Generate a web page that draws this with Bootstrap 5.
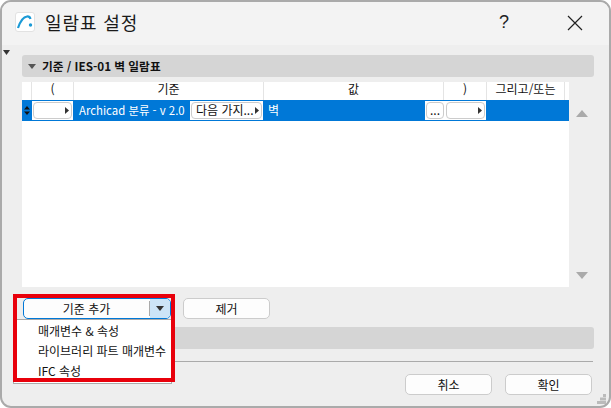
<!DOCTYPE html>
<html lang="ko">
  <head>
    <meta charset="UTF-8" />
    <meta name="viewport" content="width=device-width, initial-scale=1.0" />
    <title>일람표 설정</title>
    <link
      href="https://cdn.jsdelivr.net/npm/bootstrap@5.3.3/dist/css/bootstrap.min.css"
      rel="stylesheet"
    />
    <style>
      html, body { margin: 0; height: 408px; background: #fff; overflow: hidden; }
      body { font: 12px/1.2 "Noto Sans CJK KR", "Liberation Sans", sans-serif; color: #111; }
      .win { position: relative; width: 611px; height: 408px; background: #eee; border: 2px solid #aaa; border-radius: 11px; overflow: hidden; }
      .titlebar { height: 43px; background: #f3f3f3; padding-left: 13px; }
      .app-logo { width: 20px; height: 20px; margin-top: -3px; background: #fff; border: 1px solid #e2e2e2; border-radius: 3px; }
      .win-title { font-size: 18px; margin: -2px 0 0 10px; color: #1a1a1a; letter-spacing: .9px; }
      .win-help { font: 18px "Liberation Sans", sans-serif; margin: -2px 0 0 auto; width: 20px; text-align: center; color: #222; }
      .win-close { margin: -2px 26px 0 53px; }
      .pane { padding: 10px 15px 0 20px; position: relative; }
      .sect-bar { height: 22px; background: #d5d5d5; border-radius: 3px; padding-left: 6px; font-size: 11.7px; font-weight: 700; width: 572px; }
      .sect-bar svg { margin-right: 6px; }
      .list-wrap { margin-top: 5px; width: 572px; }
      .list-box { width: 547px; height: 205px; background: #fff; }
      .col-head { height: 18px; }
      .col-head > div { border-right: 1px solid #e4e4e4; height: 18px; text-align: center; }
      .c0 { width: 10px; flex: none; } .c1 { width: 42px; } .c2 { width: 190px; } .c3 { width: 180px; } .c4 { width: 43px; } .c5 { width: 78px; }
      .sel-row { height: 21px; background: #0078d7; color: #fff; }
      .mini-cell { height: 19px; background: #fff; padding: 1px; gap: 2px; }
      .mini { height: 17px; flex: 1; background: #fff; color: #111; border: 1px solid #ccc; border-radius: 4px; padding: 0 2px 0 4px; white-space: nowrap; }
      .mini .tri { margin-left: auto; }
      .cell-open { width: 41px; }
      .crit-txt { width: 117px; padding-left: 6px; font-size: 11.4px; white-space: nowrap; }
      .cell-op { width: 73px; }
      .val-txt { width: 162px; padding-left: 5px; }
      .cell-end { width: 61px; }
      .mini-dot { flex: 0 0 18px; justify-content: center; padding: 0; }
      .scroll-col { width: 25px; padding: 28px 0 8px; }
      .act-row { margin-top: 11px; padding-left: 1px; }
      .dlg-btn { width: 87px; height: 21px; background: #fdfdfd; border: 1px solid #ccc; border-radius: 5px; padding: 0; font-size: 12px; color: #111; line-height: 1; }
      .split-btn { width: 148px; height: 21px; background: #fdfdfd; border: 1px solid #0078d7; border-radius: 5px; overflow: hidden; margin-right: 12px; }
      .split-main { flex: 1; text-align: center; border-right: 1px solid #aaa; height: 15px; line-height: 15px; }
      .split-arrow { width: 20px; height: 100%; background: #cce4f7; }
      .sect-low { margin-top: 8px; }
      .foot-line { border-top: 1px solid #aaa; margin-top: 12px; width: 571px; }
      .foot-row { margin-top: 12px; width: 570px; gap: 13px; }
      .add-menu { position: absolute; left: 11px; top: 317px; width: 159px; height: 65px; background: #fff; border: 1px solid #aaa; padding: 1px 0 0 24px; line-height: 20px; }
      .mark-box { position: absolute; left: 11px; top: 292px; width: 162px; height: 88px; border: 4px solid #e8000b; pointer-events: none; }
      .side-tick { position: absolute; left: 1px; top: 48px; }
      .grip { position: absolute; right: 2px; bottom: 1px; }
    </style>
  </head>
  <body>
    <div class="win">
      <div class="titlebar d-flex align-items-center">
        <div class="app-logo d-flex align-items-center justify-content-center">
          <svg width="18" height="18" viewBox="0 0 18 18">
            <path d="M2 15C4 9 7 4 11 3.500c2-.2 3 .8 3.500 2.500" fill="none" stroke="#1b9ad6" stroke-width="2.200" />
            <circle cx="14.500" cy="12" r="1.700" fill="#1b9ad6" />
          </svg>
        </div>
        <div class="win-title">일람표 설정</div>
        <div class="win-help">?</div>
        <svg class="win-close" width="16" height="16" viewBox="0 0 16 16">
          <path d="M1 1l14 14M15 1L1 15" stroke="#222" stroke-width="1.200" />
        </svg>
      </div>

      <svg class="side-tick" width="7" height="5" viewBox="0 0 7 5"><path d="M0 0h7L3.500 5z" fill="#333" /></svg>

      <div class="pane">
        <div class="sect-bar d-flex align-items-center">
          <svg width="8" height="5" viewBox="0 0 8 5"><path d="M0 0h8L4 5z" fill="#555" /></svg>
          기준 / IES-01 벽 일람표
        </div>

        <div class="list-wrap d-flex">
          <div class="list-box">
            <div class="col-head d-flex">
              <div class="c0"></div>
              <div class="c1">(</div>
              <div class="c2">기준</div>
              <div class="c3">값</div>
              <div class="c4">)</div>
              <div class="c5">그리고/또는</div>
            </div>
            <div class="sel-row d-flex align-items-center">
              <svg class="c0" width="10" height="11" viewBox="0 0 10 11"><path d="M5 1l3 3.500H2zM5 10L2 6.500h6z" fill="#111" /></svg>
              <div class="mini-cell cell-open d-flex">
                <div class="mini d-flex align-items-center">
                  <svg class="tri" width="4" height="7" viewBox="0 0 4 7"><path d="M0 0l4 3.500L0 7z" fill="#333" /></svg>
                </div>
              </div>
              <div class="crit-txt">Archicad 분류 - v 2.0</div>
              <div class="mini-cell cell-op d-flex">
                <div class="mini d-flex align-items-center">
                  다음 가지...
                  <svg class="tri" width="4" height="7" viewBox="0 0 4 7"><path d="M0 0l4 3.500L0 7z" fill="#333" /></svg>
                </div>
              </div>
              <div class="val-txt">벽</div>
              <div class="mini-cell cell-end d-flex">
                <div class="mini mini-dot d-flex align-items-center">...</div>
                <div class="mini d-flex align-items-center">
                  <svg class="tri" width="4" height="7" viewBox="0 0 4 7"><path d="M0 0l4 3.500L0 7z" fill="#333" /></svg>
                </div>
              </div>
            </div>
          </div>
          <div class="scroll-col d-flex flex-column justify-content-between align-items-center">
            <svg width="12" height="7" viewBox="0 0 12 7"><path d="M6 0l6 7H0z" fill="#aaa" /></svg>
            <svg width="12" height="7" viewBox="0 0 12 7"><path d="M0 0h12L6 7z" fill="#aaa" /></svg>
          </div>
        </div>

        <div class="act-row d-flex">
          <div class="split-btn d-flex align-items-center">
            <div class="split-main">기준 추가</div>
            <div class="split-arrow d-flex align-items-center justify-content-center">
              <svg width="8" height="5" viewBox="0 0 8 5"><path d="M0 0h8L4 5z" fill="#333" /></svg>
            </div>
          </div>
          <button type="button" class="dlg-btn">제거</button>
        </div>

        <div class="sect-bar sect-low"></div>
        <div class="foot-line"></div>
        <div class="foot-row d-flex justify-content-end">
          <button type="button" class="dlg-btn">취소</button>
          <button type="button" class="dlg-btn">확인</button>
        </div>
      </div>

      <div class="add-menu">
        <div>매개변수 &amp; 속성</div>
        <div>라이브러리 파트 매개변수</div>
        <div>IFC 속성</div>
      </div>
      <div class="mark-box"></div>

      <svg class="grip" width="11" height="11" viewBox="0 0 11 11">
        <path d="M7 0h3v3H7zM4 3.500h3v3H4zM7 3.500h3v3H7zM1 7h3v3H1zM4 7h3v3H4zM7 7h3v3H7z" fill="#bbb" />
      </svg>
    </div>
  </body>
</html>
